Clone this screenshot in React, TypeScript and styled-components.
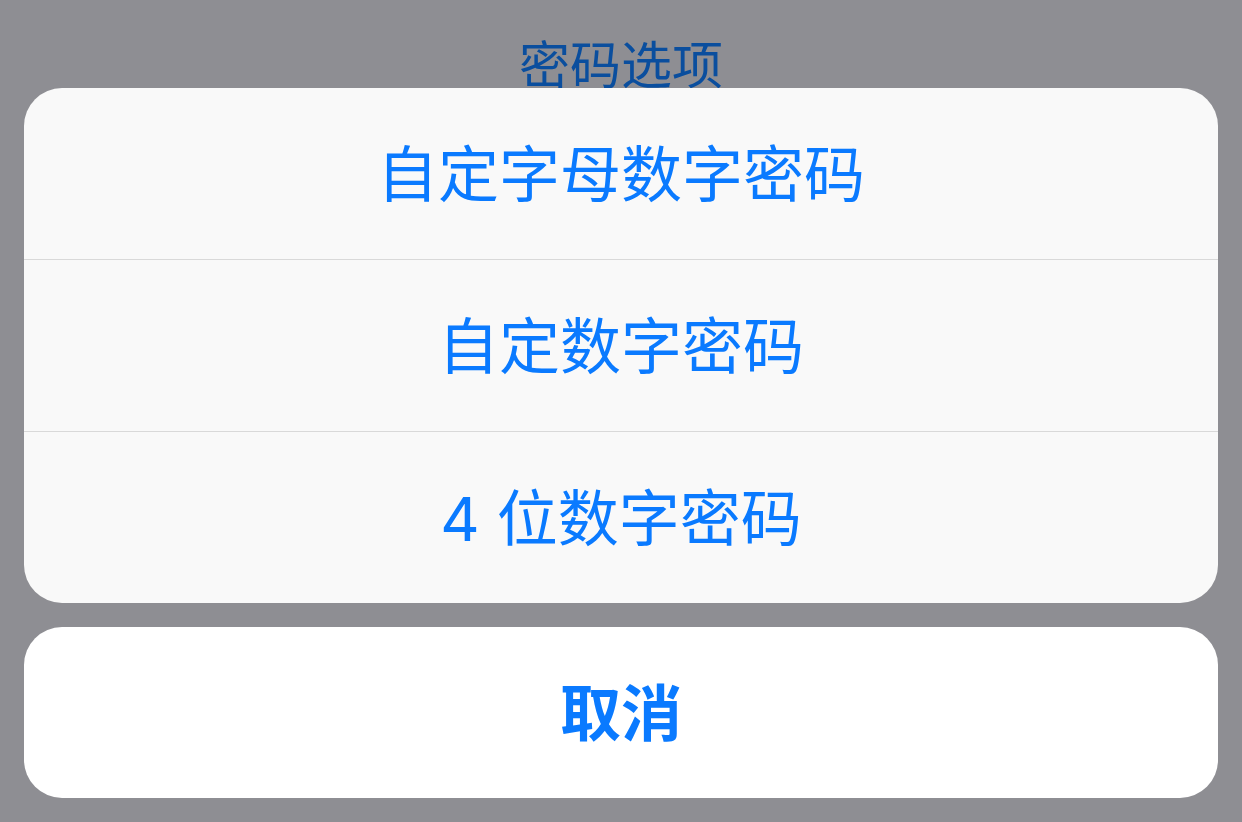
import React from 'react'
import styled, { createGlobalStyle } from 'styled-components'

const GlobalStyle = createGlobalStyle`
  html, body {
    margin: 0;
    padding: 0;
    background: #8e8e93;
  }
  body {
    font-family: Inter, 'Noto Sans CJK SC', sans-serif;
  }
`

const Screen = styled.div`
  width: 1242px;
  height: 822px;
  box-sizing: border-box;
  padding: 0 24px 24px 24px;
  display: flex;
  flex-direction: column;
  background: #8e8e93;
  overflow: hidden;
`

const Header = styled.div`
  height: 88px;
  overflow: hidden;
  display: flex;
  justify-content: center;
  flex-shrink: 0;
`

const Title = styled.h1`
  margin: 0;
  padding-top: 34px;
  font-size: 51px;
  line-height: 64px;
  font-weight: 400;
  color: #0a4e9e;
`

const Sheet = styled.div`
  background: #f9f9f9;
  border-radius: 38px;
  display: flex;
  flex-direction: column;
  overflow: hidden;
  flex-shrink: 0;
`

const Option = styled.button<{ $bold?: boolean }>`
  box-sizing: content-box;
  height: 167px;
  border: none;
  margin: 0;
  padding: 4px 0 0 0;
  background: transparent;
  display: flex;
  align-items: center;
  justify-content: center;
  font-family: inherit;
  font-size: 61px;
  line-height: 1;
  font-weight: ${({ $bold }) => ($bold ? 700 : 400)};
  color: #0a7aff;

  & + & {
    border-top: 1px solid #d9d9d9;
  }
`

const CancelSheet = styled(Sheet)`
  margin-top: 24px;
  background: #ffffff;
`

const options = ['自定字母数字密码', '自定数字密码', '4 位数字密码']

export default function App() {
  return (
    <>
      <GlobalStyle />
      <Screen>
        <Header>
          <Title>密码选项</Title>
        </Header>
        <Sheet>
          {options.map((label) => (
            <Option key={label}>{label}</Option>
          ))}
        </Sheet>
        <CancelSheet>
          <Option $bold>取消</Option>
        </CancelSheet>
      </Screen>
    </>
  )
}
